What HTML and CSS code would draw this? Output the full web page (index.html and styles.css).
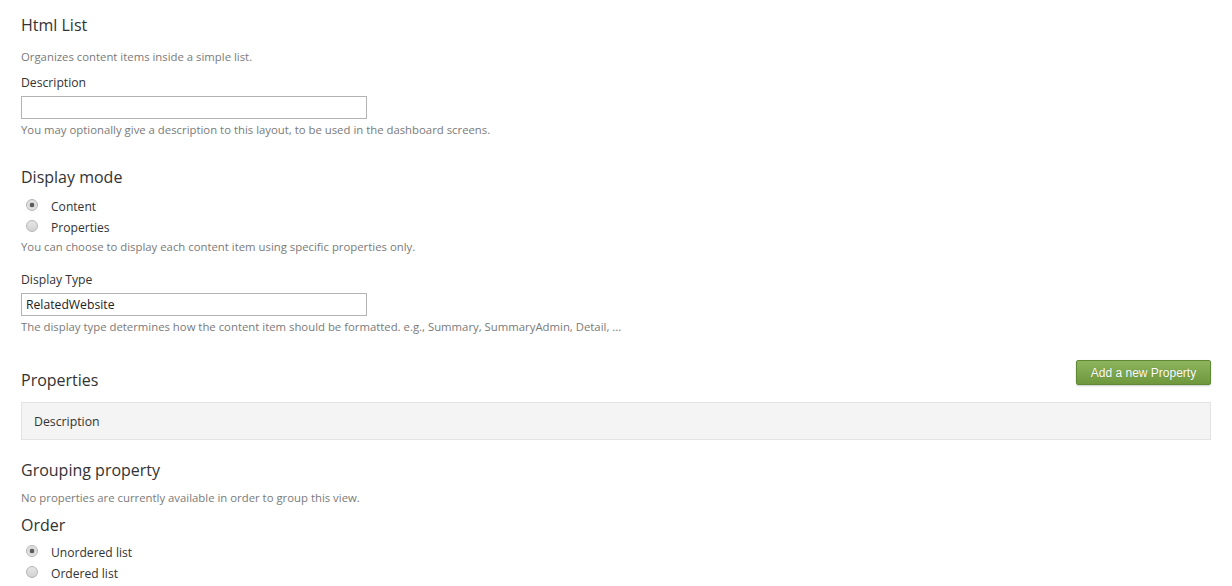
FILE: index.html
```html
<!DOCTYPE html>
<html>
<head>
<meta charset="utf-8">
<link rel="stylesheet" href="styles.css">
</head>
<body>
<div class="page">
  <h2 class="heading h-first">Html List</h2>
  <p class="hint hint-intro">Organizes content items inside a simple list.</p>

  <label class="label label-desc">Description</label>
  <input class="text-box" type="text" value="">
  <p class="hint hint-after-input">You may optionally give a description to this layout, to be used in the dashboard screens.</p>

  <h2 class="heading h-display">Display mode</h2>
  <div class="radio-group rg-display">
    <label class="radio-row"><span class="radio checked"></span><span class="radio-text">Content</span></label>
    <label class="radio-row"><span class="radio"></span><span class="radio-text">Properties</span></label>
  </div>
  <p class="hint hint-after-radio">You can choose to display each content item using specific properties only.</p>

  <label class="label label-type">Display Type</label>
  <input class="text-box" type="text" value="RelatedWebsite">
  <p class="hint hint-after-input">The display type determines how the content item should be formatted. e.g., Summary, SummaryAdmin, Detail, ...</p>

  <div class="props-row">
    <h2 class="heading h-props">Properties</h2>
    <button class="btn-add" type="button">Add a new Property</button>
  </div>
  <div class="prop-list">
    <div class="prop-item">Description</div>
  </div>

  <h2 class="heading h-group">Grouping property</h2>
  <p class="hint hint-group">No properties are currently available in order to group this view.</p>

  <h2 class="heading h-order">Order</h2>
  <div class="radio-group rg-order">
    <label class="radio-row"><span class="radio checked"></span><span class="radio-text">Unordered list</span></label>
    <label class="radio-row"><span class="radio"></span><span class="radio-text">Ordered list</span></label>
  </div>
</div>
</body>
</html>
```

FILE: styles.css
```css
html, body {
  margin: 0;
  padding: 0;
  background: #ffffff;
}

body {
  font-family: "Open Sans", "Noto Sans", "Liberation Sans", sans-serif;
  color: #333333;
}

.page {
  padding: 15px 21px 0 21px;
  display: flex;
  flex-direction: column;
  align-items: flex-start;
}

.heading {
  margin: 0;
  font-size: 16px;
  font-weight: 400;
  line-height: 20px;
  color: #333333;
}

.hint {
  margin: 0;
  font-size: 11.35px;
  line-height: 16px;
  color: #7a7a7a;
}

.label {
  display: block;
  font-size: 12.2px;
  line-height: 16px;
  color: #333333;
}

.text-box {
  box-sizing: border-box;
  width: 346px;
  height: 23px;
  margin: 5px 0 0 0;
  padding: 0 4px;
  border: 1px solid #b3b3b3;
  border-radius: 0;
  font-family: inherit;
  font-size: 12.2px;
  color: #222;
  background: #fff;
  outline: none;
}

.hint-intro { margin-top: 14px; }
.label-desc { margin-top: 10px; }
.hint-after-input { margin-top: 3px; }
.h-display { margin-top: 29px; }
.rg-display { margin-top: 8px; }
.hint-after-radio { margin-top: 2px; }
.label-type { margin-top: 17px; }

.radio-group {
  display: flex;
  flex-direction: column;
}

.radio-row {
  display: flex;
  align-items: center;
  height: 21px;
}

.radio {
  box-sizing: border-box;
  width: 12px;
  height: 12px;
  margin: 0 13px 0 5px;
  border-radius: 50%;
  border: 1px solid #b5b5b5;
  background: linear-gradient(#e6e6e6, #d2d2d2);
  position: relative;
  top: -1px;
  flex: none;
}

.radio.checked {
  background: radial-gradient(circle, #5a5a5a 0, #5a5a5a 2px, #d8d8d8 2.6px, #e9e9e9 6px);
}

.radio-text {
  font-size: 12.1px;
  line-height: 16px;
  color: #333333;
  position: relative;
  top: 1px;
}

.props-row {
  align-self: stretch;
  display: flex;
  justify-content: space-between;
  align-items: flex-start;
  margin-top: 25px;
}

.h-props { margin-top: 10px; }

.btn-add {
  box-sizing: border-box;
  width: 135px;
  height: 25px;
  padding: 0;
  border: 1px solid #5f8734;
  border-radius: 2px;
  background: linear-gradient(#8db45d, #6f983d);
  color: #ffffff;
  font-family: "Liberation Sans", Arial, sans-serif;
  font-size: 12px;
  text-shadow: 0 0 1px rgba(0,0,0,0.25);
  box-shadow: 0 1px 2px rgba(0,0,0,0.2);
}

.prop-list {
  align-self: stretch;
  margin-top: 12px;
}

.prop-item {
  box-sizing: border-box;
  height: 38px;
  padding: 0 12px;
  display: flex;
  align-items: center;
  background: #f4f4f4;
  border: 1px solid #e3e3e3;
  font-size: 12.3px;
  color: #333333;
}

.h-group { margin-top: 20px; }
.hint-group { margin-top: 10px; }
.h-order { margin-top: 9px; }
.rg-order { margin-top: 6px; }
```
